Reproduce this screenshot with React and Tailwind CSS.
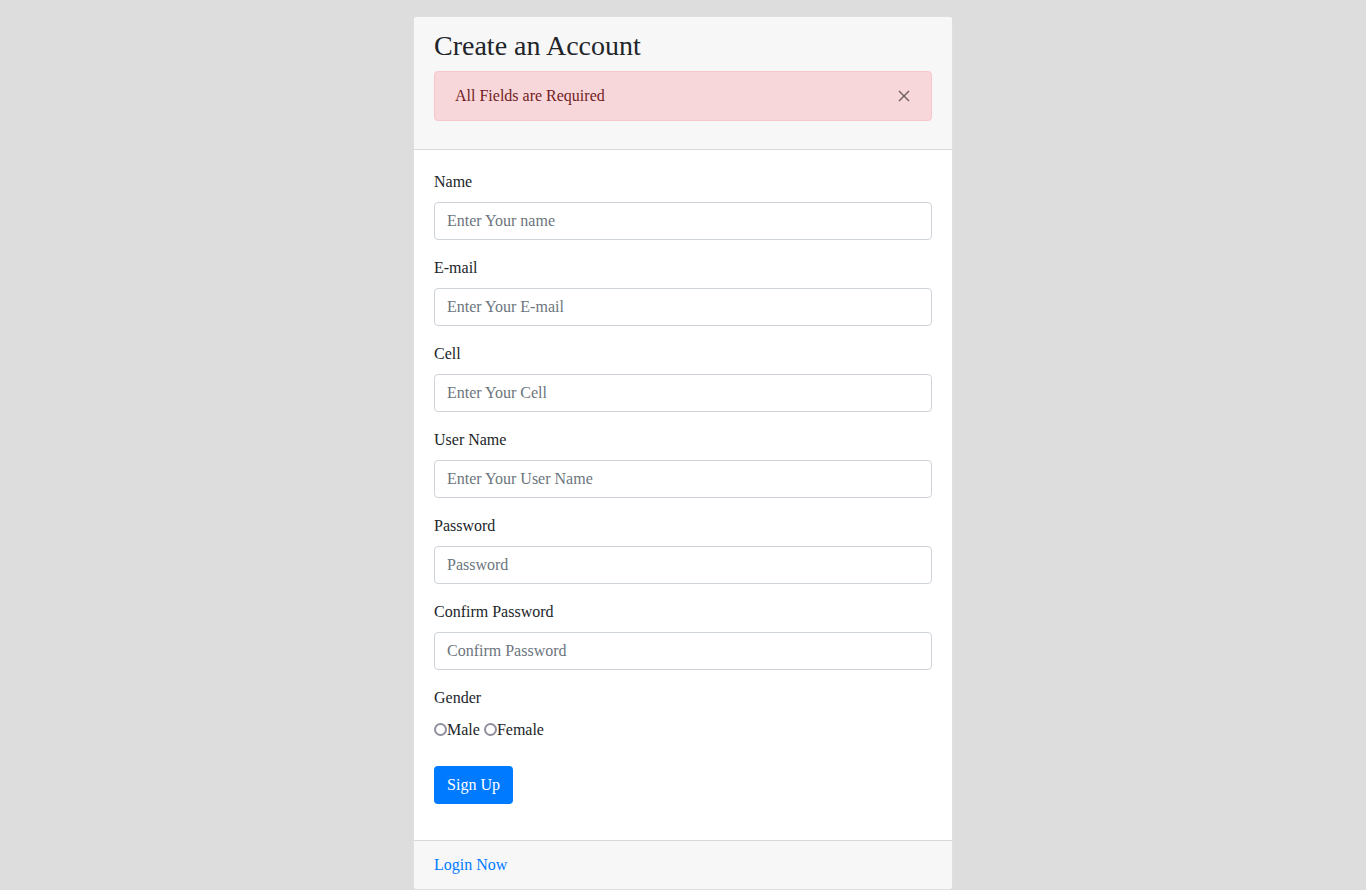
import React from 'react';

const fields = [
  { label: 'Name', placeholder: 'Enter Your name', type: 'text' },
  { label: 'E-mail', placeholder: 'Enter Your E-mail', type: 'email' },
  { label: 'Cell', placeholder: 'Enter Your Cell', type: 'text' },
  { label: 'User Name', placeholder: 'Enter Your User Name', type: 'text' },
  { label: 'Password', placeholder: 'Password', type: 'password' },
  { label: 'Confirm Password', placeholder: 'Confirm Password', type: 'password' },
];

export default function App() {
  return (
    <div
      className="min-h-[890px] bg-[#dddddd] pt-4 text-[16px] leading-6 text-[#212529]"
      style={{ fontFamily: '"Liberation Serif", "Times New Roman", serif' }}
    >
      <div className="mx-auto w-[540px] rounded border border-[rgba(0,0,0,0.125)] bg-white">
        {/* Header */}
        <div className="rounded-t bg-[#f7f7f7] px-5 pt-3 pb-3 border-b border-[rgba(0,0,0,0.125)]">
          <h3 className="mb-2 text-[28px] leading-[1.2] font-normal">Create an Account</h3>
          <div className="mb-4 flex items-center justify-between rounded border border-[#f5c6cb] bg-[#f8d7da] pl-5 pr-[15px] py-3 text-[#721c24]">
            <span>All Fields are Required</span>
            <button className="flex h-6 w-6 items-center justify-center text-[#6b5b5d]">
              <svg width="12" height="12" viewBox="0 0 12 12" fill="none" stroke="currentColor" strokeWidth="1.4">
                <path d="M1 1L11 11M11 1L1 11" />
              </svg>
            </button>
          </div>
        </div>

        {/* Body */}
        <form className="p-5" onSubmit={(e) => e.preventDefault()}>
          {fields.map((f) => (
            <div key={f.label} className="mb-4">
              <label className="mb-2 block">{f.label}</label>
              <input
                type={f.type}
                placeholder={f.placeholder}
                className="block h-[38px] w-full rounded border border-[#ced4da] bg-white px-3 py-1.5 text-[16px] placeholder:text-[#6c757d] outline-none"
              />
            </div>
          ))}
          <div className="mb-6">
            <label className="mb-2 block">Gender</label>
            <div className="flex items-center">
              <input
                type="radio"
                name="gender"
                className="h-[13px] w-[13px] appearance-none rounded-full border-2 border-[#8f8f9d] bg-white checked:border-[4px] checked:border-[#007bff]"
              />
              <span>Male</span>
              <span className="w-[4px]" />
              <input
                type="radio"
                name="gender"
                className="h-[13px] w-[13px] appearance-none rounded-full border-2 border-[#8f8f9d] bg-white checked:border-[4px] checked:border-[#007bff]"
              />
              <span>Female</span>
            </div>
          </div>
          <div className="mb-4">
            <button className="h-[38px] w-[79px] rounded bg-[#007bff] text-white">Sign Up</button>
          </div>
        </form>

        {/* Footer */}
        <div className="rounded-b border-t border-[rgba(0,0,0,0.125)] bg-[#f7f7f7] px-5 py-3">
          <a href="#" className="text-[#007bff]">Login Now</a>
        </div>
      </div>
    </div>
  );
}
